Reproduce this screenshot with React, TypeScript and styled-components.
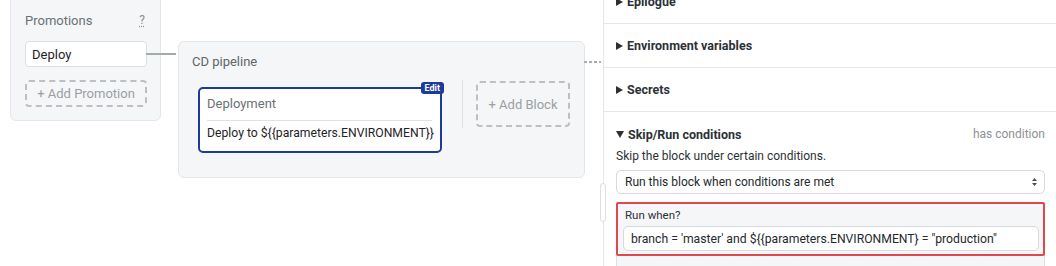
import React from "react";
import styled, { createGlobalStyle } from "styled-components";

const GlobalStyle = createGlobalStyle`
  * { box-sizing: border-box; }
  body {
    margin: 0;
    background: #ffffff;
    font-family: Roboto, "Liberation Sans", Arial, sans-serif;
    color: #24292e;
  }
`;

const Page = styled.div`
  display: flex;
  width: 1056px;
  height: 266px;
  overflow: hidden;
  background: #fff;
`;

const Canvas = styled.div`
  position: relative;
  display: flex;
  align-items: flex-start;
  width: 603px;
  flex-shrink: 0;
  padding-left: 10px;
`;

const PromoPanel = styled.div`
  width: 151px;
  margin-top: -8px;
  padding: 16px 13px 13px 14px;
  background: #f5f6f8;
  border: 1px solid #e4e6e9;
  border-radius: 6px;
`;

const PromoHeader = styled.div`
  display: flex;
  justify-content: space-between;
  align-items: center;
  height: 22px;
  font-size: 13px;
  color: #6b7075;
`;

const Help = styled.span`
  font-size: 12px;
  color: #8a8f94;
  text-decoration: underline dotted;
  text-underline-offset: 2px;
  margin-right: 2px;
`;

const PromoItem = styled.div`
  position: relative;
  display: flex;
  align-items: center;
  height: 26px;
  margin-top: 10px;
  padding-left: 6px;
  background: #fff;
  border: 1px solid #dcdfe3;
  border-radius: 4px;
  font-size: 13px;
  color: #1f2328;

  &::after {
    content: "";
    position: absolute;
    left: 100%;
    top: 11px;
    width: 30px;
    height: 2px;
    background: #a2adab;
  }
`;

const DashedButton = styled.div<{ $h: number }>`
  display: flex;
  align-items: center;
  justify-content: center;
  height: ${(p) => p.$h}px;
  border: 2px dashed #bcc0c4;
  border-radius: 4px;
  font-size: 13px;
  color: #9a9fa4;
`;

const PromoAdd = styled(DashedButton)`
  margin-top: 13px;
`;

const Pipeline = styled.div`
  position: relative;
  width: 407px;
  height: 137px;
  margin: 41px 0 0 17px;
  padding: 10px 14px 0 13px;
  background: #f5f6f8;
  border: 1px solid #e4e6e9;
  border-radius: 6px;

  &::after {
    content: "";
    position: absolute;
    left: 100%;
    top: 19px;
    width: 17px;
    height: 2px;
    background: repeating-linear-gradient(90deg, #a9aeb3 0 3px, transparent 3px 5px);
  }
`;

const PipelineTitle = styled.div`
  height: 20px;
  line-height: 20px;
  font-size: 13px;
  color: #5f656b;
`;

const BlockRow = styled.div`
  display: flex;
  align-items: flex-start;
  margin-top: 8px;
  padding-left: 6px;
`;

const Block = styled.div`
  position: relative;
  width: 244px;
  height: 66px;
  margin-top: 7px;
  padding: 0 8px 0 7px;
  background: #fff;
  border: 2px solid #1d3b9c;
  border-radius: 5px;
`;

const EditBadge = styled.span`
  position: absolute;
  top: -7px;
  right: -4px;
  height: 12px;
  padding: 0 4px;
  line-height: 12px;
  background: #1d3b9c;
  border-radius: 3px;
  font-size: 9px;
  font-weight: 700;
  color: #fff;
`;

const BlockName = styled.div`
  padding: 6px 0 7px;
  line-height: 18px;
  font-size: 13px;
  color: #6b7075;
  border-bottom: 1px solid #dfe2e5;
`;

const BlockJob = styled.div`
  padding-top: 3px;
  line-height: 18px;
  font-size: 12.2px;
  color: #1f2328;
  white-space: nowrap;
`;

const VDivider = styled.div`
  width: 1px;
  height: 48px;
  margin: 0 13px 0 20px;
  background: #dfe2e5;
`;

const AddBlock = styled(DashedButton)`
  width: 96px;
  margin-top: 1px;
`;

const Sidebar = styled.div`
  position: relative;
  flex: 1;
  border-left: 1px solid #e4e6e9;
`;

const Handle = styled.div`
  position: absolute;
  left: -4px;
  top: 183px;
  width: 6px;
  height: 39px;
  background: #fff;
  border: 1px solid #dcdfe3;
  border-radius: 3px;
`;

const Row = styled.div<{ $first?: boolean }>`
  display: flex;
  align-items: center;
  height: 44px;
  margin-top: ${(p) => (p.$first ? "-20px" : "0")};
  padding: 0 12px;
  border-bottom: 1px solid #e6e8eb;
`;

const Caret = styled.span<{ $open?: boolean }>`
  display: inline-block;
  width: 0;
  height: 0;
  margin-right: 4px;
  ${(p) =>
    p.$open
      ? `border-top: 7px solid #2c3136; border-left: 4px solid transparent; border-right: 4px solid transparent;`
      : `border-left: 7px solid #2c3136; border-top: 4px solid transparent; border-bottom: 4px solid transparent;`}
`;

const RowTitle = styled.span`
  font-size: 12.5px;
  font-weight: 700;
  color: #2c3136;
`;

const Section = styled.div`
  padding: 13px 11px 0 12px;
`;

const SectionHead = styled.div`
  display: flex;
  align-items: center;
  height: 18px;
`;

const Status = styled.span`
  margin-left: auto;
  font-size: 12px;
  color: #8c9196;
`;

const Hint = styled.div`
  margin-top: 4px;
  line-height: 18px;
  font-size: 12px;
  color: #2c3136;
`;

const Select = styled.div`
  display: flex;
  align-items: center;
  justify-content: space-between;
  height: 24px;
  margin-top: 5px;
  padding: 0 6px 0 8px;
  background: #fff;
  border: 1px solid #d6d9dd;
  border-radius: 5px;
  font-size: 12px;
  color: #24292e;
`;

const Fields = styled.div`
  margin-top: 8px;
  height: 80px;
  background: #f5f6f8;
  border: 1px solid #dcdfe3;
  border-radius: 3px;
`;

const Highlight = styled.div`
  margin: -1px -1px 0;
  padding: 3px 4px 3px 5px;
  border: 2px solid #e2474d;
  border-radius: 2px;
`;

const Label = styled.div`
  padding-left: 2px;
  line-height: 16px;
  font-size: 11.5px;
  color: #2c3136;
`;

const Input = styled.div`
  display: flex;
  align-items: center;
  height: 25px;
  margin-top: 3px;
  padding-left: 7px;
  background: #fff;
  border: 1px solid #d6d9dd;
  border-radius: 5px;
  font-size: 12.2px;
  color: #24292e;
  white-space: nowrap;
`;

const SortIcon = () => (
  <svg width="7" height="10" viewBox="0 0 7 10">
    <path d="M3.5 1 L6 4 H1 Z M3.5 9 L1 6 H6 Z" fill="#4a5056" />
  </svg>
);

export default function App() {
  return (
    <>
      <GlobalStyle />
      <Page>
        <Canvas>
          <PromoPanel>
            <PromoHeader>
              Promotions
              <Help>?</Help>
            </PromoHeader>
            <PromoItem>Deploy</PromoItem>
            <PromoAdd $h={27}>+ Add Promotion</PromoAdd>
          </PromoPanel>
          <Pipeline>
            <PipelineTitle>CD pipeline</PipelineTitle>
            <BlockRow>
              <Block>
                <EditBadge>Edit</EditBadge>
                <BlockName>Deployment</BlockName>
                <BlockJob>{"Deploy to ${{parameters.ENVIRONMENT}}"}</BlockJob>
              </Block>
              <VDivider />
              <AddBlock $h={46}>+ Add Block</AddBlock>
            </BlockRow>
          </Pipeline>
        </Canvas>
        <Sidebar>
          <Handle />
          <Row $first>
            <Caret />
            <RowTitle>Epilogue</RowTitle>
          </Row>
          <Row>
            <Caret />
            <RowTitle>Environment variables</RowTitle>
          </Row>
          <Row>
            <Caret />
            <RowTitle>Secrets</RowTitle>
          </Row>
          <Section>
            <SectionHead>
              <Caret $open />
              <RowTitle>Skip/Run conditions</RowTitle>
              <Status>has condition</Status>
            </SectionHead>
            <Hint>Skip the block under certain conditions.</Hint>
            <Select>
              Run this block when conditions are met
              <SortIcon />
            </Select>
            <Fields>
              <Highlight>
                <Label>Run when?</Label>
                <Input>
                  {"branch = 'master' and ${{parameters.ENVIRONMENT} = \"production\""}
                </Input>
              </Highlight>
            </Fields>
          </Section>
        </Sidebar>
      </Page>
    </>
  );
}
